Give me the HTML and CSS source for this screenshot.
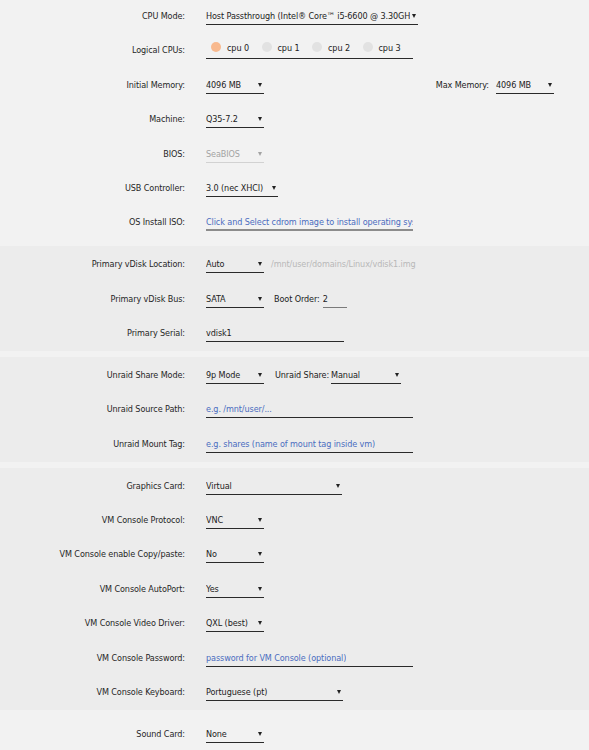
FILE: index.html
```html
<!DOCTYPE html>
<html>
<head>
<meta charset="utf-8">
<link rel="stylesheet" href="styles.css">
</head>
<body>
<div class="plain">
  <div class="row">
    <div class="label">CPU Mode:</div>
    <div class="field sel w212"><span class="val clip">Host Passthrough (Intel® Core™ i5-6600 @ 3.30GHz)</span><i class="arr"></i></div>
  </div>
  <div class="row">
    <div class="label">Logical CPUs:</div>
    <div class="field cpus w207">
      <span class="cpu"><b class="dot on"></b>cpu 0</span>
      <span class="cpu"><b class="dot"></b>cpu 1</span>
      <span class="cpu"><b class="dot"></b>cpu 2</span>
      <span class="cpu"><b class="dot"></b>cpu 3</span>
    </div>
  </div>
  <div class="row">
    <div class="label">Initial Memory:</div>
    <div class="field sel w58"><span class="val">4096 MB</span><i class="arr"></i></div>
    <div class="aside">
      <span class="inl-label">Max Memory:</span>
      <div class="field sel w58"><span class="val">4096 MB</span><i class="arr"></i></div>
    </div>
  </div>
  <div class="row">
    <div class="label">Machine:</div>
    <div class="field sel w58"><span class="val">Q35-7.2</span><i class="arr"></i></div>
  </div>
  <div class="row">
    <div class="label">BIOS:</div>
    <div class="field sel w58 disabled"><span class="val">SeaBIOS</span><i class="arr"></i></div>
  </div>
  <div class="row">
    <div class="label">USB Controller:</div>
    <div class="field sel w72"><span class="val">3.0 (nec XHCI)</span><i class="arr"></i></div>
  </div>
  <div class="row">
    <div class="label">OS Install ISO:</div>
    <div class="field input iso w207"><span class="ph clip">Click and Select cdrom image to install operating system</span></div>
  </div>
</div>

<div class="section">
  <div class="row">
    <div class="label">Primary vDisk Location:</div>
    <div class="field sel w58"><span class="val">Auto</span><i class="arr"></i></div>
    <span class="path">/mnt/user/domains/Linux/vdisk1.img</span>
  </div>
  <div class="row">
    <div class="label">Primary vDisk Bus:</div>
    <div class="field sel w58"><span class="val">SATA</span><i class="arr"></i></div>
    <span class="inl-label boot">Boot Order:</span>
    <div class="field input w24 order"><span class="val">2</span></div>
  </div>
  <div class="row">
    <div class="label">Primary Serial:</div>
    <div class="field input w138"><span class="val">vdisk1</span></div>
  </div>
</div>

<div class="section">
  <div class="row">
    <div class="label">Unraid Share Mode:</div>
    <div class="field sel w58"><span class="val">9p Mode</span><i class="arr"></i></div>
    <span class="inl-label share">Unraid Share:</span>
    <div class="field sel w70"><span class="val">Manual</span><i class="arr"></i></div>
  </div>
  <div class="row">
    <div class="label">Unraid Source Path:</div>
    <div class="field input w207"><span class="ph">e.g. /mnt/user/...</span></div>
  </div>
  <div class="row">
    <div class="label">Unraid Mount Tag:</div>
    <div class="field input w207"><span class="ph">e.g. shares (name of mount tag inside vm)</span></div>
  </div>
</div>

<div class="section">
  <div class="row">
    <div class="label">Graphics Card:</div>
    <div class="field sel w136"><span class="val">Virtual</span><i class="arr"></i></div>
  </div>
  <div class="row">
    <div class="label">VM Console Protocol:</div>
    <div class="field sel w58"><span class="val">VNC</span><i class="arr"></i></div>
  </div>
  <div class="row">
    <div class="label">VM Console enable Copy/paste:</div>
    <div class="field sel w58"><span class="val">No</span><i class="arr"></i></div>
  </div>
  <div class="row">
    <div class="label">VM Console AutoPort:</div>
    <div class="field sel w58"><span class="val">Yes</span><i class="arr"></i></div>
  </div>
  <div class="row">
    <div class="label">VM Console Video Driver:</div>
    <div class="field sel w58"><span class="val">QXL (best)</span><i class="arr"></i></div>
  </div>
  <div class="row">
    <div class="label">VM Console Password:</div>
    <div class="field input w207"><span class="ph">password for VM Console (optional)</span></div>
  </div>
  <div class="row">
    <div class="label">VM Console Keyboard:</div>
    <div class="field sel w137"><span class="val">Portuguese (pt)</span><i class="arr"></i></div>
  </div>
</div>

<div class="plain last">
  <div class="row">
    <div class="label">Sound Card:</div>
    <div class="field sel w58"><span class="val">None</span><i class="arr"></i></div>
  </div>
</div>
</body>
</html>
```

FILE: styles.css
```css
html, body {
  margin: 0;
  padding: 0;
}
body {
  background: #f2f2f2;
  font-family: "DejaVu Sans Condensed", "DejaVu Sans", "Liberation Sans", sans-serif;
  font-stretch: condensed;
  font-size: 9px;
  letter-spacing: -0.1px;
  color: #222;
  overflow: hidden;
}
.section {
  background: #ececec;
  margin-top: 5.5px;
  padding-top: 2px;
}
.plain.last {
  margin-top: 7.5px;
}
.row {
  display: flex;
  align-items: flex-start;
  height: 34.4px;
}
.label {
  width: 185px;
  flex: none;
  margin-right: 21px;
  margin-top: 9px;
  line-height: 14px;
  text-align: right;
  white-space: nowrap;
  color: #262626;
}
.field {
  flex: none;
  box-sizing: border-box;
  margin-top: 9px;
  line-height: 14px;
  padding-bottom: 1px;
  border-bottom: 1px solid #2a2a2a;
  display: flex;
  align-items: center;
  white-space: nowrap;
  overflow: hidden;
}
.sel {
  position: relative;
}
.val {
  flex: 1;
  overflow: hidden;
}
.clip {
  flex: 1;
  overflow: hidden;
}
.arr {
  flex: none;
  width: 0;
  height: 0;
  border-left: 2.5px solid transparent;
  border-right: 2.5px solid transparent;
  border-top: 4px solid #222;
  margin: 0 2px 0 2px;
}
.disabled .val { color: #a3a3a3; }
.disabled { border-bottom-color: #d2d2d2; }
.disabled .arr { border-top-color: #a3a3a3; }

.w212 { width: 212px; }
.w207 { width: 207px; }
.w58 { width: 58px; }
.w72 { width: 72px; }
.w70 { width: 70px; }
.w24 { width: 24px; }
.w136 { width: 136px; }
.w137 { width: 137px; }
.w138 { width: 138px; }

.iso {
  border-bottom: 2px solid #8c8c8c;
  padding-bottom: 0;
}
.ph {
  color: #4a6cc0;
  overflow: hidden;
}

.cpus {
  padding-left: 5px;
  margin-top: 7px;
  padding-bottom: 3px;
}
.cpu {
  display: flex;
  align-items: center;
  width: 50.5px;
  flex: none;
}
.dot {
  width: 10px;
  height: 10px;
  border-radius: 50%;
  background: #e2e2e2;
  margin-right: 6px;
  margin-top: -3px;
}
.dot.on { background: #f8b98e; }

.aside {
  margin-left: auto;
  margin-right: 35px;
  display: flex;
  align-items: flex-start;
}
.inl-label {
  margin-top: 9px;
  line-height: 14px;
  white-space: nowrap;
  margin-right: 7px;
}
.path {
  margin-top: 9px;
  margin-left: 7px;
  line-height: 14px;
  color: #b8b8b8;
  white-space: nowrap;
}
.boot {
  margin-left: 10px;
  margin-right: 3px;
}
.order {
  border-bottom-color: #7a7a7a;
}
.share {
  margin-left: 11px;
  margin-right: 2px;
}
```
